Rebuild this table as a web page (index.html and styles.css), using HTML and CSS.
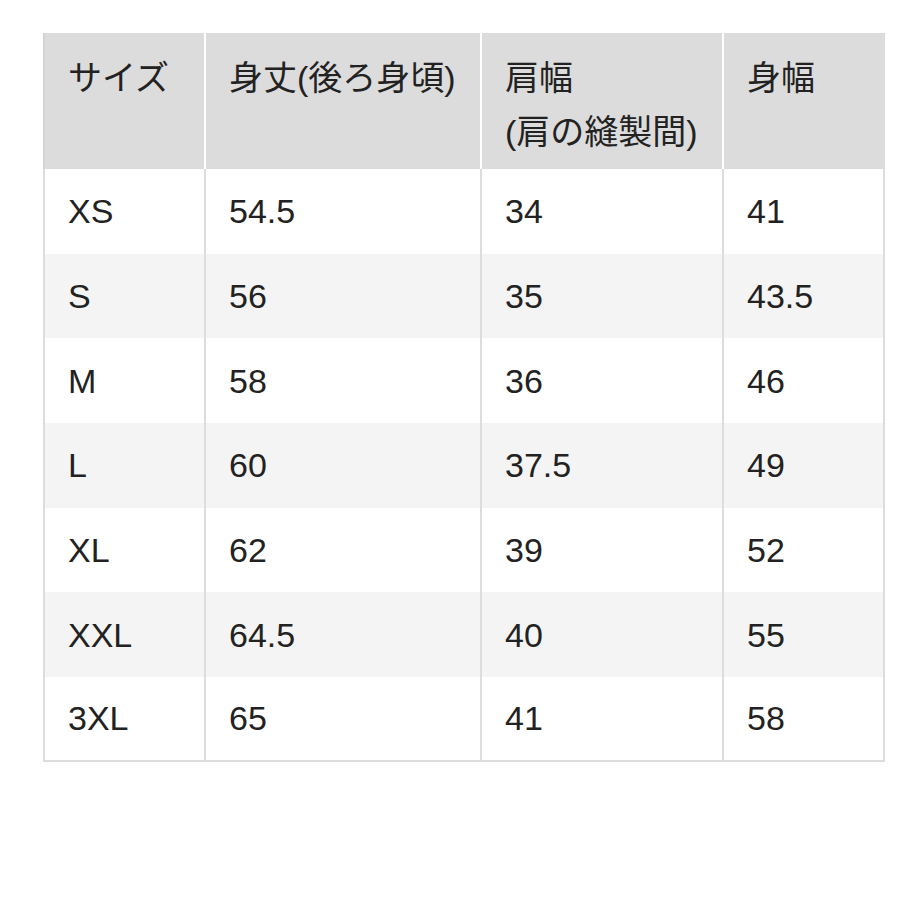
FILE: index.html
```html
<!DOCTYPE html>
<html lang="ja">
<head>
<meta charset="utf-8">
<link rel="stylesheet" href="styles.css">
</head>
<body>
<div class="page">
  <table class="size-table">
    <colgroup>
      <col class="c1"><col class="c2"><col class="c3"><col class="c4">
    </colgroup>
    <thead>
      <tr>
        <th>サイズ</th>
        <th>身丈(後ろ身頃)</th>
        <th>肩幅<br>(肩の縫製間)</th>
        <th>身幅</th>
      </tr>
    </thead>
    <tbody>
      <tr><td>XS</td><td>54.5</td><td>34</td><td>41</td></tr>
      <tr><td>S</td><td>56</td><td>35</td><td>43.5</td></tr>
      <tr><td>M</td><td>58</td><td>36</td><td>46</td></tr>
      <tr><td>L</td><td>60</td><td>37.5</td><td>49</td></tr>
      <tr><td>XL</td><td>62</td><td>39</td><td>52</td></tr>
      <tr><td>XXL</td><td>64.5</td><td>40</td><td>55</td></tr>
      <tr><td>3XL</td><td>65</td><td>41</td><td>58</td></tr>
    </tbody>
  </table>
</div>
</body>
</html>
```

FILE: styles.css
```css
html, body {
  margin: 0;
  padding: 0;
  background: #ffffff;
}

.page {
  padding: 33px 0 0 43px;
}

.size-table {
  border-collapse: separate;
  border-spacing: 0;
  table-layout: fixed;
  width: 842px;
  font-family: "Liberation Sans", "Noto Sans CJK JP", sans-serif;
  font-size: 34px;
  color: #222222;
}

.c1 { width: 161px; }
.c2 { width: 276px; }
.c3 { width: 242px; }
.c4 { width: 163px; }

.size-table th {
  font-weight: normal;
  text-align: left;
  vertical-align: top;
  background: #dcdcdc;
  height: 136px;
  box-sizing: border-box;
  padding: 18px 10px 0 23px;
  line-height: 54px;
  border-left: 2px solid #ffffff;
}

.size-table th:first-child {
  border-left: 2px solid #d4d4d4;
}

.size-table th:last-child {
  border-right: 2px solid #dcdcdc;
}

.size-table td {
  height: 84.7px;
  box-sizing: border-box;
  padding: 0 10px 0 23px;
  line-height: 54px;
  vertical-align: middle;
  border-left: 2px solid #dddddd;
}

.size-table td:last-child {
  border-right: 2px solid #dddddd;
}

.size-table tbody tr:nth-child(even) td {
  background: #f4f4f4;
}

.size-table tbody tr:last-child td {
  border-bottom: 2px solid #dddddd;
}
```
